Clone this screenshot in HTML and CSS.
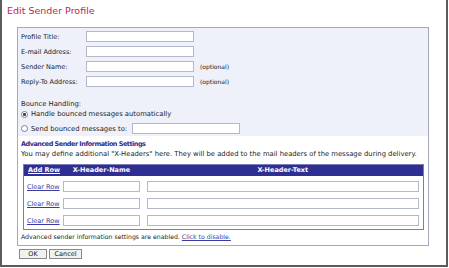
FILE: index.html
```html
<!DOCTYPE html>
<html lang="en">
<head>
  <meta charset="UTF-8" />
  <title>Edit Sender Profile</title>
  <link rel="stylesheet" href="styles.css">
</head>
<body>
  <div class="frame">
    <h1 class="title">Edit Sender Profile</h1>

    <div class="panel">
      <div class="basic">
        <div class="field"><label>Profile Title:</label><input class="txt" type="text"></div>
        <div class="field"><label>E-mail Address:</label><input class="txt" type="text"></div>
        <div class="field"><label>Sender Name:</label><input class="txt" type="text"><span class="hint">(optional)</span></div>
        <div class="field"><label>Reply-To Address:</label><input class="txt" type="text"><span class="hint">(optional)</span></div>

        <div class="bounce-title">Bounce Handling:</div>
        <label class="opt"><input type="radio" name="bounce" checked>Handle bounced messages automatically</label>
        <label class="opt opt-send"><input type="radio" name="bounce">Send bounced messages to:<input class="txt bounce-addr" type="text"></label>
      </div>

      <div class="advanced">
        <div class="adv-title">Advanced Sender Information Settings</div>
        <p class="adv-desc">You may define additional "X-Headers" here. They will be added to the mail headers of the message during delivery.</p>

        <table class="xh">
          <colgroup>
            <col class="c-act">
            <col class="c-name">
            <col class="c-text">
          </colgroup>
          <thead>
            <tr>
              <th class="th-act"><a href="#">Add Row</a></th>
              <th>X-Header-Name</th>
              <th>X-Header-Text</th>
            </tr>
          </thead>
          <tbody>
            <tr>
              <td class="td-act"><a href="#">Clear Row</a></td>
              <td class="td-name"><input class="txt" type="text"></td>
              <td class="td-text"><input class="txt" type="text"></td>
            </tr>
            <tr>
              <td class="td-act"><a href="#">Clear Row</a></td>
              <td class="td-name"><input class="txt" type="text"></td>
              <td class="td-text"><input class="txt" type="text"></td>
            </tr>
            <tr class="last">
              <td class="td-act"><a href="#">Clear Row</a></td>
              <td class="td-name"><input class="txt" type="text"></td>
              <td class="td-text"><input class="txt" type="text"></td>
            </tr>
          </tbody>
        </table>

        <p class="adv-note">Advanced sender information settings are enabled. <a href="#">Click to disable.</a></p>
      </div>
    </div>

    <div class="actions">
      <button class="btn btn-ok">OK</button>
      <button class="btn btn-cancel">Cancel</button>
    </div>
  </div>
</body>
</html>
```

FILE: styles.css
```css
body {
  margin: 0;
  background: #fff;
}

.frame {
  box-sizing: border-box;
  width: 448px;
  height: 267px;
  border: 2px solid #5c5c5c;
  border-top: 0;
  font-family: "DejaVu Sans", Verdana, sans-serif;
  font-size: 6.8px;
  color: #222;
}

.title {
  margin: 0;
  padding: 5px 0 0 5px;
  font-size: 9.5px;
  line-height: 12px;
  font-weight: normal;
  color: #c41c4f;
}

.panel {
  box-sizing: border-box;
  width: 412px;
  margin: 10px 0 0 15px;
  border: 1px solid #a4a8c0;
}

/* top block */
.basic {
  background: #eef1f9;
  padding: 3px 3px 2px 3px;
}

.field {
  display: flex;
  align-items: center;
  height: 11px;
  margin-bottom: 4px;
  font-size: 6.5px;
}

.field label {
  width: 65px;
}

.txt {
  box-sizing: border-box;
  width: 108px;
  height: 11px;
  margin: 0;
  padding: 0 2px;
  border: 1px solid #b3b9cb;
  background: #fff;
  font: inherit;
}

.hint {
  margin-left: 6px;
  font-size: 6px;
}

.bounce-title {
  margin-top: 12px;
  line-height: 10px;
}

.opt {
  display: flex;
  align-items: center;
  height: 10px;
}

.opt-send {
  height: 11px;
  margin-top: 4px;
}

.opt input[type="radio"] {
  appearance: none;
  box-sizing: border-box;
  width: 7px;
  height: 7px;
  margin: 0 3px 0 0;
  border: 1px solid #7d8494;
  border-radius: 50%;
  background: #fff;
}

.opt input[type="radio"]:checked {
  background: radial-gradient(circle, #3c4a50 0 1.3px, #fff 1.8px);
}

.bounce-addr {
  margin-left: 5px;
}

/* advanced block */
.advanced {
  padding: 0 3px 3px 3px;
}

.adv-title {
  margin-top: 3px;
  line-height: 10px;
  font-size: 6.5px;
  font-weight: bold;
  letter-spacing: -0.5px;
  color: #2d2d8c;
}

.adv-desc {
  margin: 0;
  line-height: 10px;
  white-space: nowrap;
}

.xh {
  width: 401px;
  margin: 5px 0 0 2px;
  table-layout: fixed;
  border-collapse: collapse;
  border: 1px solid #7b7bb5;
  font-size: 6.5px;
}

.c-act { width: 37px; }
.c-name { width: 82px; }

.xh th {
  height: 11px;
  padding: 0;
  background: #2e2e93;
  color: #fff;
  font-weight: bold;
  text-align: center;
  line-height: 11px;
}

.xh .th-act {
  text-align: left;
  padding-left: 4px;
}

.xh th a {
  color: #fff;
}

.xh td {
  padding: 5px 0 1px 0;
  height: 11px;
  vertical-align: middle;
}

.xh .last td {
  padding-bottom: 3px;
}

.td-act {
  padding-left: 3px !important;
}

.td-name {
  padding-left: 2px !important;
}

.td-name .txt {
  width: 77px;
  display: block;
}

.td-text {
  padding-left: 4px !important;
}

.td-text .txt {
  width: 272px;
  display: block;
}

a {
  color: #3b3ba0;
}

.adv-note {
  margin: 2px 0 0 0;
  line-height: 10px;
  font-size: 6.2px;
}

/* buttons */
.actions {
  display: flex;
  gap: 2px;
  margin: 3px 0 0 17px;
}

.btn {
  box-sizing: border-box;
  height: 10px;
  margin: 0;
  padding: 0;
  border: 1px solid #8a8a8a;
  background: #f1f1f1;
  font: inherit;
  font-size: 6.5px;
  color: #222;
  line-height: 8px;
}

.btn-ok { width: 28px; }
.btn-cancel { width: 33px; }
```
